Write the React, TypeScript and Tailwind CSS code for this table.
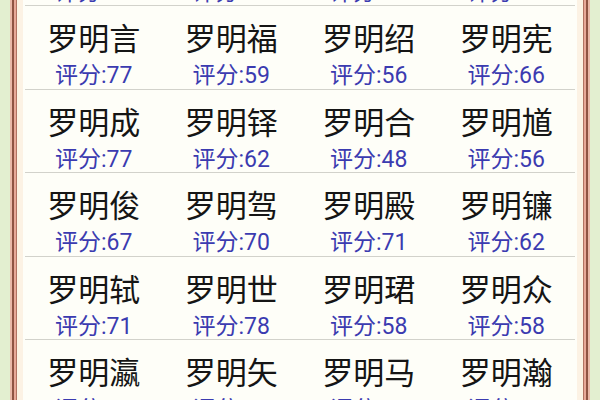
const rows: [string, number][][] = [
  [["罗明朗", 70], ["罗明桂", 70], ["罗明锦", 70], ["罗明济", 70]],
  [["罗明言", 77], ["罗明福", 59], ["罗明绍", 56], ["罗明宪", 66]],
  [["罗明成", 77], ["罗明铎", 62], ["罗明合", 48], ["罗明馗", 56]],
  [["罗明俊", 67], ["罗明驾", 70], ["罗明殿", 71], ["罗明镰", 62]],
  [["罗明轼", 71], ["罗明世", 78], ["罗明珺", 58], ["罗明众", 58]],
  [["罗明瀛", 70], ["罗明矢", 70], ["罗明马", 70], ["罗明瀚", 70]],
];

function NameCell({ name, score }: { name: string; score: number }) {
  return (
    <div className="flex flex-col items-center pt-[15px]">
      <span className="text-[31px] leading-[31px] text-[#151515]">{name}</span>
      <span
        className="mt-[12px] text-[23px] leading-[24px] text-[#3b3bb0]"
        style={{ fontFamily: "Roboto, 'Noto Sans CJK SC', sans-serif" }}
      >
        评分:{score}
      </span>
    </div>
  );
}

export default function App() {
  return (
    <div
      className="h-[400px] w-[600px] overflow-hidden bg-[#e3efd0] px-[10px]"
      style={{ fontFamily: "'Noto Sans CJK SC', sans-serif" }}
    >
      <div className="h-full border-x-2 border-[#e9b8a8]">
        <div className="h-full border-x-2 border-[#8e5343]">
          <div className="h-full border-x-2 border-[#e7a898]">
            <div className="h-full border-x border-[#b27262]">
              <div className="h-full bg-[#fcf2e4] px-[6px]">
                <div className="h-full overflow-hidden bg-[#fefef8] px-[2px]">
                  <div className="-mt-[77.5px]">
                    {rows.map((row, i) => (
                      <div
                        key={i}
                        className="grid h-[83.5px] grid-cols-4 border-b border-[#d2d2cb]"
                      >
                        {row.map(([n, s]) => (
                          <NameCell key={n} name={n} score={s} />
                        ))}
                      </div>
                    ))}
                  </div>
                </div>
              </div>
            </div>
          </div>
        </div>
      </div>
    </div>
  );
}
